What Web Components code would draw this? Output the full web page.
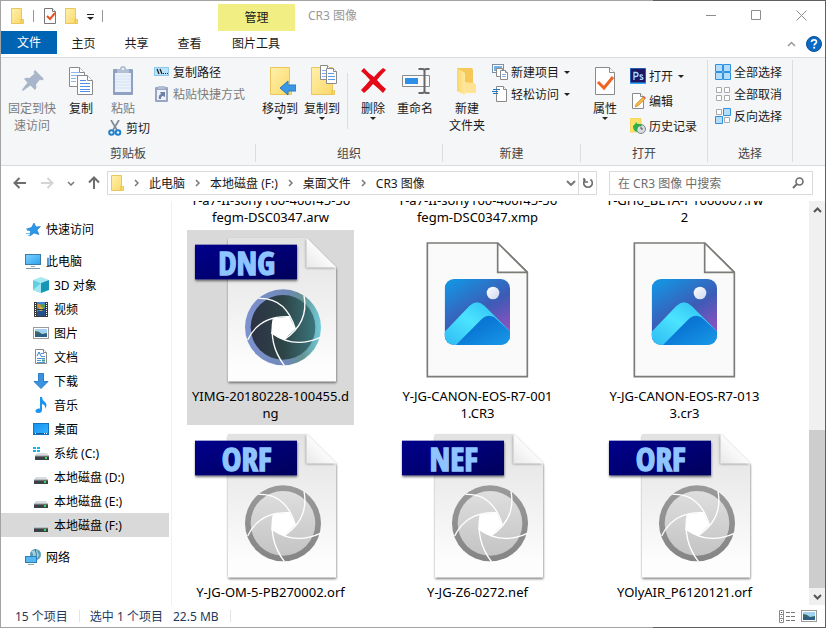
<!DOCTYPE html>
<html lang="zh-CN">
<head>
<meta charset="utf-8">
<title>CR3 图像</title>
<style>
body {
	margin: 0;
	font: 12px/17px "Noto Sans", "Noto Sans CJK SC", sans-serif;
	color: #1a1a1a;
}
</style>
</head>
<body>
<explorer-window>
	<title-bar slot="title" context="管理">CR3 图像</title-bar>
	<tab-strip slot="tabs"></tab-strip>
	<ribbon-bar slot="ribbon"></ribbon-bar>
	<address-bar slot="address"></address-bar>
	<nav-tree slot="nav">
		<nav-item icon="star">快速访问</nav-item>
		<nav-item icon="computer" spaced>此电脑</nav-item>
		<nav-item icon="cube" child>3D 对象</nav-item>
		<nav-item icon="video" child>视频</nav-item>
		<nav-item icon="picture" child>图片</nav-item>
		<nav-item icon="document" child>文档</nav-item>
		<nav-item icon="download" child>下载</nav-item>
		<nav-item icon="music" child>音乐</nav-item>
		<nav-item icon="desktop" child>桌面</nav-item>
		<nav-item icon="system" child>系统 (C:)</nav-item>
		<nav-item icon="drive" child>本地磁盘 (D:)</nav-item>
		<nav-item icon="drive" child>本地磁盘 (E:)</nav-item>
		<nav-item icon="drive" child selected>本地磁盘 (F:)</nav-item>
		<nav-item icon="network" spaced>网络</nav-item>
	</nav-tree>
	<file-grid slot="files">
		<file-tile kind="photo">Y-a7-II-sony100-400f45-56<br>fegm-DSC0347.arw</file-tile>
		<file-tile kind="photo">Y-a7-II-sony100-400f45-56<br>fegm-DSC0347.xmp</file-tile>
		<file-tile kind="photo">Y-GH6_BETA-P1000007.rw<br>2</file-tile>
		<file-tile kind="raw" tag="DNG" color selected>YIMG-20180228-100455.d<br>ng</file-tile>
		<file-tile kind="photo">Y-JG-CANON-EOS-R7-001<br>1.CR3</file-tile>
		<file-tile kind="photo">Y-JG-CANON-EOS-R7-013<br>3.cr3</file-tile>
		<file-tile kind="raw" tag="ORF">Y-JG-OM-5-PB270002.orf</file-tile>
		<file-tile kind="raw" tag="NEF">Y-JG-Z6-0272.nef</file-tile>
		<file-tile kind="raw" tag="ORF">YOlyAIR_P6120121.orf</file-tile>
	</file-grid>
	<status-bar slot="status"></status-bar>
</explorer-window>

<script>
const page = (x, y, w, h, c, fill = '#fff', stroke = '#8a8a8a') =>
	`<path d="M${x} ${y}h${w - c}l${c} ${c}v${h - c}h-${w}z" fill="${fill}" stroke="${stroke}"/>
	<path d="M${x + w - c} ${y}v${c}h${c}" fill="#fff" stroke="${stroke}"/>`;

const folder = (w, h) => `
	<defs><linearGradient id="f" x2="1" y2="1"><stop stop-color="#fff0ad"/><stop offset="1" stop-color="#fbd866"/></linearGradient></defs>
	<path d="M.5 .5h${w - 3}v${h - 5}h2v4h-${w - 1}z" fill="url(#f)" stroke="#eac65d"/>
	<path d="M${w - 3} ${h - 5}v4" stroke="#e8b93c"/>`;

const driveBody = `
	<path d="M3 8h10l2 3h-14z" fill="#d9dcdf"/>
	<path d="M1 11h14v4h-14z" fill="#3c4145"/>
	<path d="M1 11h14" stroke="#9a9ea2"/>
	<rect x="11" y="12" width="2" height="2" fill="#35e04a"/>`;

const landscape = `
	<rect x=".5" y="2.5" width="15" height="11" fill="#fff" stroke="#9b9b9b"/>
	<rect x="2" y="4" width="12" height="8" fill="#9fd2f3"/>
	<path d="M2 6q4 0 7 3l5-1v1h-12z" fill="#3b6b5a"/>
	<path d="M2 9h12v3h-12z" fill="#2d5f86"/>`;

// name: [width, height, markup]
const ICONS = {
	folder: [14, 16, folder(13, 16)],
	checkdoc: [13, 16, `${page(.5, .5, 11, 15, 3, '#fdfdfd', '#777')}<path d="M3 8l3 3 5-6" fill="none" stroke="#e4511c" stroke-width="2"/>`],
	caret: [7, 7, '<path d="M0 1.5h7" stroke="#222"/><path d="M0 4h7l-3.500 3z" fill="#222"/>'],
	down: [6, 3, '<path d="M0 0h6l-3 3z" fill="#222"/>'],
	min: [11, 11, '<path d="M0 5.500h10" stroke="#8d8d8d"/>'],
	max: [11, 11, '<path d="M.5 .5h9v9h-9z" fill="none" stroke="#8d8d8d"/>'],
	close: [11, 11, '<path d="M.5 .5l10 10m0-10l-10 10" stroke="#8d8d8d"/>'],
	up: [9, 6, '<path d="M1 5l3.500-3.500 3.500 3.500" fill="none" stroke="#999" stroke-width="1.500"/>'],
	help: [16, 16, `<circle cx="8" cy="8" r="7.500" fill="#0b6ac6" stroke="#0a4f94"/>
		<path d="M5.500 6q.2-2.200 2.600-2.200t2.400 2q0 1.200-1.300 1.900-1 .5-1 1.800" fill="none" stroke="#fff" stroke-width="1.700"/><rect x="7.300" y="10.800" width="1.800" height="1.800" fill="#fff"/>`],
	pin: [32, 32, '<path d="M19 5l9 9-2.500 1.500-1.500-1-4 5q1 4-1 5.500l-4.500-4.500-7 5-1.500.5.500-2 5-6.500-3.500-3.500q2-2 5.500-1l5-4.500-1-1.500z" fill="#a8b5ca"/>'],
	copy: [32, 32, `${page(4.5, 2.5, 15, 19, 5)}<path d="M6 7.500h8m-8 3h10m-10 3h5m-5 3h5" stroke="#8cb6ee"/>
		${page(12.5, 10.5, 15, 19, 5)}<path d="M15 15.500h6m-6 3h10m-10 3h10m-10 3h10m-10 2h10" stroke="#4f8fe6"/>`],
	paste: [32, 32, `<rect x="6" y="4" width="20" height="26" rx="1" fill="#8fa0c2"/><rect x="8" y="8" width="16" height="19" fill="#eaf1fb"/>
		<path d="M8 11h16m-16 3h16m-16 3h16m-16 3h16m-16 3h16" stroke="#d5e2f3"/>
		<path d="M10 4h3q0-3 3-3t3 3h3v4h-12z" fill="#b3bfd3"/><circle cx="16" cy="4" r="1" fill="#fff"/>`],
	cut: [16, 16, `<path d="M4 0l6 10M12 0l-6 10" stroke="#7d8a99" stroke-width="1.700"/>
		<circle cx="4.500" cy="12.500" r="2.300" fill="none" stroke="#1e80cc" stroke-width="2"/><circle cx="11" cy="12.500" r="2.300" fill="none" stroke="#1e80cc" stroke-width="2"/>`],
	path: [16, 16, '<rect x=".5" y="3.500" width="14" height="8" fill="#b9e2fb" stroke="#8cc8ee"/><path d="M3 5l2 5m1-5l2 5" stroke="#222" stroke-width="1.300"/><path d="M9 9.500h1m1 0h1m1 0h1" stroke="#222"/>'],
	shortcut: [16, 16, `<rect x="1" y="1" width="13" height="15" rx="1" fill="#96a6c4"/><rect x="3" y="4" width="9" height="10" fill="#eef3fb"/>
		<rect x="4" y="0" width="7" height="3" fill="#b3bfd3"/><path d="M5 13q-1-4 2-5l-1-2h5v5l-2-1q-2 0-2 3z" fill="#6e82a8"/>`],
	moveto: [32, 32, `<g transform="translate(6 2)">${folder(22, 28)}</g><path d="M16 23l8-7v4h8v6h-8v4z" fill="#3a98e4" stroke="#2a7cc4"/>`],
	copyto: [32, 32, `<g transform="translate(5 2)">${folder(24, 28)}</g>${page(14.5, .5, 10, 14, 3)}<path d="M16 5.500h5m-5 3h5m-5 3h5" stroke="#7fb0ee"/>
		${page(20.500, 3.500, 10, 15, 3)}<path d="M22 8.500h6m-6 3h7m-7 3h7" stroke="#5d97e8"/>`],
	delete: [32, 32, '<path d="M4 6l3-3q5 6 10 9 4-5 9-9l3 2q-5 5-9 10 4 5 9 9l-3 4q-5-5-10-9-4 5-9 9l-3-3q5-5 9-10-4-5-9-9z" fill="#e30b17"/>'],
	rename: [32, 32, `<path d="M3.500 10.500h27v11h-27z" fill="#fafafa" stroke="#8c8c8c"/><path d="M6 13h13v6h-13z" fill="#2d8fe6"/>
		<path d="M19.500 4h4q2 0 2 2v20q0 2 2 2h3m-11 0h4q2 0 2-2m0-20q0-2 2-2h3" fill="none" stroke="#686868" stroke-width="2"/>`],
	newfolder: [32, 32, `<defs><linearGradient id="n" x2="1"><stop stop-color="#fbd56a"/><stop offset="1" stop-color="#ffe9a0"/></linearGradient></defs>
		<path d="M6 3h14q2 0 2 2v13l3 2v8h-12l-7-2z" fill="#f4c95a"/><path d="M6 3l8 5v22l-8-4z" fill="url(#n)"/><path d="M22 18l3 2v8h-11v-11z" fill="#ffe392"/>`],
	newitem: [16, 16, `<rect x=".5" y=".5" width="11" height="8" fill="#fff" stroke="#7b8ea3"/><rect x="2" y="2" width="8" height="5" fill="#6fb2e8"/>
		<path d="M4.500 4.500h6v8h-6z" fill="#fff" stroke="#8a8a8a"/>${page(8.5, 6.5, 7, 9, 2)}<path d="M10 10.500h4m-4 2h4" stroke="#8ab4e8"/>`],
	easy: [16, 16, `${page(4.500, .500, 10, 15, 3)}<path d="M1 3.500h7m-8 2h6m-5 2h5" stroke="#1f78cc"/>`],
	props: [32, 32, `${page(6.5, 2.500, 19, 27, 5, '#fff', '#8a8a8a')}<path d="M9 17l6 6 9-11" fill="none" stroke="#ee6420" stroke-width="3"/>`],
	ps: [16, 16, `<rect width="16" height="16" fill="#31a8ff"/><rect width="15" height="14" x=".5" y=".5" fill="#1d1763"/>
		<path d="M4 12v-7.500h2q2 0 2 2t-2 2h-2M13 7.300q-3-1-3 .5 0 1 1.500 1.300t1.500 1.400q-.5 1.500-3.200.6" fill="none" stroke="#a9dcff" stroke-width="1.300"/>`],
	edit: [16, 16, `${page(2.5, .5, 11, 15, 3)}<path d="M5 14l1-3 7-7 2 2-7 7z" fill="#f5b53c" stroke="#b8792a" stroke-width=".500"/><path d="M13 4l1-1 2 2-1 1z" fill="#d45a5a"/>`],
	history: [16, 16, `<path d="M0 0h10l1 1v13h-11z" fill="#ffe06b" stroke="#e6c24a" stroke-width=".500"/><circle cx="11" cy="11" r="4.500" fill="#d9dde0" stroke="#7d858c"/>
		<path d="M11 8.500v2.500h2" fill="none" stroke="#555"/><path d="M3 8l4-4v2q4-1 5 2-5-1-5 6-4-1-4-6z" fill="#2fae4a"/>`],
	selall: [16, 16, '<path d="M.5 .5h7v7h-7zM8.500 .5h7v7h-7zM.5 8.500h7v7h-7zM8.500 8.500h7v7h-7z" fill="#b5ddfa" stroke="#2f92e0"/>'],
	selnone: [16, 16, '<path d="M1.500 1.500h5v5h-5zM9.500 1.500h5v5h-5zM1.500 9.500h5v5h-5zM9.500 9.500h5v5h-5z" fill="#fff" stroke="#aaa"/>'],
	selinv: [16, 16, '<path d="M1.500 1.500h5v5h-5zM9.500 9.500h5v5h-5z" fill="#fff" stroke="#aaa"/><path d="M8.500 .5h7v7h-7zM.5 8.500h7v7h-7z" fill="#b5ddfa" stroke="#2f92e0"/>'],
	back: [14, 12, '<path d="M6.500 1l-5 5 5 5M2 6h11" fill="none" stroke="#6d6d6d" stroke-width="2"/>'],
	forward: [14, 12, '<path d="M7.500 1l5 5-5 5M12 6h-11" fill="none" stroke="#d4d4d4" stroke-width="2"/>'],
	upward: [12, 14, '<path d="M1 6.500l5-5 5 5M6 2v11" fill="none" stroke="#6d6d6d" stroke-width="2"/>'],
	chevdown: [10, 6, '<path d="M1 1l4 4 4-4" fill="none" stroke="#777" stroke-width="2"/>'],
	chevsmall: [8, 5, '<path d="M1 1l3 3 3-3" fill="none" stroke="#777" stroke-width="1.500"/>'],
	chevright: [5, 8, '<path d="M1 1l3 3-3 3" fill="none" stroke="#777" stroke-width="1.500"/>'],
	refresh: [12, 12, '<path d="M3.500 2.500a4.300 4.300 0 1 0 5 0M2 1v4h4" fill="none" stroke="#6d6d6d" stroke-width="1.600"/>'],
	search: [12, 12, '<circle cx="7.500" cy="4.500" r="3.500" fill="none" stroke="#6d6d6d" stroke-width="1.600"/><path d="M5 7l-4 4" stroke="#6d6d6d" stroke-width="2"/>'],
	scrollup: [9, 6, '<path d="M1 5l3.500-3.500 3.500 3.500" fill="none" stroke="#555" stroke-width="2"/>'],
	scrolldown: [9, 6, '<path d="M1 1l3.500 3.500 3.500-3.500" fill="none" stroke="#555" stroke-width="2"/>'],
	star: [16, 16, '<path d="M9 2l2 4 4.500-.5-3.500 3.500 2 4.500-5-1.500-4 3 .5-5-4-2 5-1.500z" fill="#2a97e8" stroke="#1877c4" stroke-width=".600"/><path d="M1 12.500h4m-3-3h2m-1 5h2" stroke="#6cbcf0"/>'],
	computer: [16, 16, `<defs><linearGradient id="c" x2="1" y2="1"><stop stop-color="#7fd2fc"/><stop offset="1" stop-color="#2aa2f0"/></linearGradient></defs>
		<rect x=".5" y="1.500" width="15" height="10" fill="url(#c)" stroke="#3a7ba8"/><path d="M6 13.500h4" stroke="#9ab"/><path d="M1 15.500h14" stroke="#8396a6"/>`],
	cube: [16, 16, '<path d="M8 0l8 3-8 3-8-3z" fill="#a6e8f2"/><path d="M0 3l8 3v10l-8-3z" fill="#5fd0e4"/><path d="M16 3l-8 3v10l8-3z" fill="#1795b5"/><path d="M0 13l8-7v10z" fill="#9fe6f0"/>'],
	video: [16, 16, `<rect x="1" y="1" width="14" height="15" fill="#3a3a3a"/><rect x="4" y="1" width="8" height="14" fill="#3f86d8"/><path d="M4 11q4-4 8-1v5h-8z" fill="#24508f"/><circle cx="6" cy="5" r="2" fill="#d9922b"/><circle cx="10" cy="5" r="2" fill="#58a13c"/><circle cx="8" cy="8" r="2" fill="#e4c02d"/>
		<path d="M2.500 2v13m11-13v13" stroke="#fff" stroke-dasharray="1 1"/><path d="M4 8.500h8" stroke="#333"/>`],
	picture: [16, 16, landscape],
	document: [16, 16, `${page(2.500, .5, 11, 14, 3)}<path d="M8 4.500h3m-7 5h8m-8 2h4m-4 2h8m-4-6h4" stroke="#4d94d8"/><path d="M4 7l2-4 2 4" fill="none" stroke="#2c7ed0"/><path d="M9 11.500h3" stroke="#3a9a80" stroke-width="2"/>`],
	download: [16, 16, '<path d="M5.500 .5h5v8h4.500l-7 7-7-7h4.500z" fill="#3a93e0" stroke="#2d7cc4"/>'],
	music: [16, 16, '<path d="M7 0h2q0 3 3 5 3 3 0 7 1-4-3-5v6q0 3-3.500 3t-3-2.500q1-2.500 4.500-2z" fill="#1d94ee"/>'],
	desktop: [16, 16, `<defs><linearGradient id="d" x2="1" y2="1"><stop stop-color="#0f92f0"/><stop offset="1" stop-color="#3ab4ff"/></linearGradient></defs>
		<rect x=".5" y="2.500" width="15" height="11" fill="url(#d)" stroke="#1474bd"/><path d="M1 12.500h14" stroke="#0d5f9e"/><path d="M2 12.500h1m8 0h1m1 0h1" stroke="#fff"/>`],
	system: [16, 16, `<g transform="translate(1 0)">${driveBody}</g><path d="M0 2h3v2h-3zM4 2h3v2h-3zM0 5h3v2h-3zM4 5h3v2h-3z" fill="#12b5ea"/>`],
	drive: [16, 16, driveBody],
	network: [16, 16, `<circle cx="10.500" cy="5.500" r="5.500" fill="#5a9cb8"/><path d="M6 2q3 3 2 5l4 2q3-2 1-5t1-3" fill="#a7d5de"/><path d="M10 0q2 4 1 10" stroke="#2e6f94" fill="none"/>
		<rect x=".5" y="7.500" width="11" height="6" fill="#55b8f5" stroke="#2d7eb5"/><path d="M3 15.500h6" stroke="#8aa"/>`],
	details: [16, 13, `<path d="M.5 .5h4v12h-4z" fill="#fff" stroke="#8a8a8a"/><path d="M0 4.500h5m-5 4h5" stroke="#8a8a8a"/><path d="M2 2.500h1" stroke="#444"/><path d="M2 6.500h1" stroke="#2a80d8"/><path d="M2 10.500h1" stroke="#d33"/>
		<path d="M7 2.500h4m1 0h4m-9 4h4m1 0h4m-9 4h4m1 0h4" stroke="#777"/>`],
	thumbs: [16, 16, landscape]
};

const mount = (el, html) => {
	const root = el.attachShadow({mode: 'open'});
	root.innerHTML = html;
	return root;
};

class UiIcon extends HTMLElement {
	connectedCallback() {
		if (this.shadowRoot) {
			return;
		}
		const [w, h, body] = ICONS[this.getAttribute('name')];
		mount(this, `
			<style>:host { display: inline-flex; flex: none; } svg { display: block; }</style>
			<svg width="${w}" height="${h}" viewBox="0 0 ${w} ${h}" aria-hidden="true">${body}</svg>`);
	}
}
customElements.define('ui-icon', UiIcon);

class ExplorerWindow extends HTMLElement {
	constructor() {
		super();
		mount(this, `
			<style>
			:host {
				display: flex;
				flex-direction: column;
				box-sizing: border-box;
				height: 100vh;
				padding: 1px;
				background: linear-gradient(to right, #a3a3a3 79%, #5f5f63 79%);
			}
			.top { background: #fff; }
			main {
				flex: 1;
				display: flex;
				min-height: 0;
				background: #fff;
			}
			</style>
			<header class="top">
				<slot name="title"></slot>
				<slot name="tabs"></slot>
				<slot name="ribbon"></slot>
				<slot name="address"></slot>
			</header>
			<main><slot name="nav"></slot><slot name="files"></slot></main>
			<slot name="status"></slot>`);
	}
}
customElements.define('explorer-window', ExplorerWindow);

class TitleBar extends HTMLElement {
	constructor() {
		super();
		mount(this, `
			<style>
			:host { display: flex; height: 30px; }
			button { border: 0; padding: 0; background: none; font: inherit; display: flex; align-items: center; justify-content: center; }
			.quick { display: flex; align-items: center; gap: 8px; box-sizing: border-box; width: 217px; padding-left: 10px; }
			.quick i { width: 1px; height: 12px; background: #999; }
			.quick i:first-of-type { margin-right: 2px; }
			.context { width: 77px; margin-top: 3px; line-height: 27px; text-align: center; background: #f1ef83; }
			.name { flex: 1; padding-left: 13px; line-height: 29px; color: #999; }
			.controls { display: flex; padding-right: 1px; }
			.controls button { width: 45px; height: 28px; }
			</style>
			<div class="quick">
				<button aria-label="文件夹"><ui-icon name="folder"></ui-icon></button><i></i>
				<button aria-label="属性"><ui-icon name="checkdoc"></ui-icon></button>
				<button aria-label="新建文件夹"><ui-icon name="folder"></ui-icon></button>
				<button aria-label="自定义"><ui-icon name="caret"></ui-icon></button><i></i>
			</div>
			<div class="context">${this.getAttribute('context')}</div>
			<div class="name"><slot></slot></div>
			<div class="controls">
				<button aria-label="最小化"><ui-icon name="min"></ui-icon></button>
				<button aria-label="最大化"><ui-icon name="max"></ui-icon></button>
				<button aria-label="关闭"><ui-icon name="close"></ui-icon></button>
			</div>`);
	}
}
customElements.define('title-bar', TitleBar);

class TabStrip extends HTMLElement {
	constructor() {
		super();
		mount(this, `
			<style>
			:host { display: flex; height: 26px; }
			button { width: 53px; height: 24px; border: 0; padding: 0; background: none; color: inherit; font: inherit; }
			.file { width: 56px; height: 23px; background: #0064b5; color: #fff; }
			.wide { width: 80px; }
			.right { flex: 1; display: flex; justify-content: flex-end; align-items: center; gap: 10px; padding-right: 3px; }
			.right button { display: flex; align-items: center; width: auto; }
			</style>
			<button class="file">文件</button>
			<button>主页</button>
			<button>共享</button>
			<button>查看</button>
			<button class="wide">图片工具</button>
			<div class="right">
				<button aria-label="折叠功能区"><ui-icon name="up"></ui-icon></button>
				<button aria-label="帮助"><ui-icon name="help"></ui-icon></button>
			</div>`);
	}
}
customElements.define('tab-strip', TabStrip);

// Big button (icon over label) by default, "small" puts them in a row
class RibbonButton extends HTMLElement {
	constructor() {
		super();
		const drop = this.hasAttribute('drop') ? '<ui-icon name="down"></ui-icon>' : '';
		const off = this.hasAttribute('off') ? 'disabled' : '';
		mount(this, `
			<style>
			:host { display: block; }
			button {
				display: flex;
				flex-direction: column;
				align-items: center;
				width: 100%;
				min-width: 42px;
				border: 0;
				padding: 0;
				background: none;
				color: #1a1a1a;
				font: inherit;
			}
			button:disabled { color: #7b7b7b; }
			.label { padding-top: 3px; white-space: nowrap; }
			:host([small]) button { flex-direction: row; height: 22px; gap: 3px; }
			:host([small]) .label { padding: 0; }
			:host([small]) ui-icon + .label + ui-icon { padding-left: 2px; }
			</style>
			<button ${off}><ui-icon name="${this.getAttribute('icon')}"></ui-icon><span class="label"><slot></slot></span>${drop}</button>`);
	}
}
customElements.define('ribbon-button', RibbonButton);

class RibbonGroup extends HTMLElement {
	constructor() {
		super();
		mount(this, `
			<style>
			:host { display: flex; }
			section { display: flex; flex-direction: column; justify-content: space-between; }
			.items { display: flex; padding: 7px 10px 0 3px; }
			:host([tight]) .items { padding-right: 6px; }
			.label { text-align: center; color: #444; padding-bottom: 3px; }
			.rule { align-self: flex-end; width: 1px; height: 18px; margin-bottom: 3px; background: #dcdddf; }
			:host([tall]) .rule { height: 102px; }
			</style>
			<section aria-label="${this.getAttribute('label')}">
				<div class="items"><slot></slot></div>
				<div class="label">${this.getAttribute('label')}</div>
			</section>
			<div class="rule"></div>`);
	}
}
customElements.define('ribbon-group', RibbonGroup);

class RibbonBar extends HTMLElement {
	constructor() {
		super();
		mount(this, `
			<style>
			:host { display: flex; height: 107px; border: solid #dadbdc; border-width: 1px 0; background: #f5f6f7; }
			.col { display: flex; flex-direction: column; align-items: flex-start; padding-left: 4px; }
			.up { margin-top: -4px; }
			.spread { gap: 3px; }
			.stack { display: flex; flex-direction: column; align-items: flex-start; }
			.cut { padding-left: 5px; }
			.rule { width: 1px; height: 56px; margin: 8px 4px 0; background: #dcdddf; }
			.pin { width: 56px; }
			</style>
			<ribbon-group label="剪贴板">
				<ribbon-button class="pin" icon="pin" off>固定到快<br>速访问</ribbon-button>
				<ribbon-button icon="copy">复制</ribbon-button>
				<div class="stack">
					<ribbon-button icon="paste" off>粘贴</ribbon-button>
					<ribbon-button class="cut" small icon="cut">剪切</ribbon-button>
				</div>
				<div class="col up">
					<ribbon-button small icon="path">复制路径</ribbon-button>
					<ribbon-button small icon="shortcut" off>粘贴快捷方式</ribbon-button>
				</div>
			</ribbon-group>
			<ribbon-group label="组织" tight>
				<ribbon-button icon="moveto" drop>移动到</ribbon-button>
				<ribbon-button icon="copyto" drop>复制到</ribbon-button>
				<div class="rule"></div>
				<ribbon-button icon="delete" drop>删除</ribbon-button>
				<ribbon-button icon="rename">重命名</ribbon-button>
			</ribbon-group>
			<ribbon-group label="新建">
				<ribbon-button icon="newfolder">新建<br>文件夹</ribbon-button>
				<div class="col up">
					<ribbon-button small icon="newitem" drop>新建项目</ribbon-button>
					<ribbon-button small icon="easy" drop>轻松访问</ribbon-button>
				</div>
			</ribbon-group>
			<ribbon-group label="打开" tall>
				<ribbon-button icon="props" drop>属性</ribbon-button>
				<div class="col spread">
					<ribbon-button small icon="ps" drop>打开</ribbon-button>
					<ribbon-button small icon="edit">编辑</ribbon-button>
					<ribbon-button small icon="history">历史记录</ribbon-button>
				</div>
			</ribbon-group>
			<ribbon-group label="选择" tall>
				<div class="col up">
					<ribbon-button small icon="selall">全部选择</ribbon-button>
					<ribbon-button small icon="selnone">全部取消</ribbon-button>
					<ribbon-button small icon="selinv">反向选择</ribbon-button>
				</div>
			</ribbon-group>`);
	}
}
customElements.define('ribbon-bar', RibbonBar);

class AddressBar extends HTMLElement {
	constructor() {
		super();
		const crumbs = ['此电脑', '本地磁盘 (F:)', '桌面文件', 'CR3 图像'];
		mount(this, `
			<style>
			:host { display: flex; align-items: center; padding: 5px 12px 6px; }
			button { display: flex; align-items: center; border: 0; padding: 0; background: none; font: inherit; color: #1a1a1a; }
			.arrows { display: flex; align-items: center; justify-content: space-between; width: 87px; margin-right: 7px; }
			.box { display: flex; align-items: center; box-sizing: border-box; height: 24px; border: 1px solid #d9d9d9; background: #fff; }
			.path { flex: 8; padding-left: 3px; }
			.path nav { flex: 1; display: flex; align-items: center; }
			.path nav ui-icon { padding: 0 10px 0 9px; }
			.path nav button { padding-right: 1px; white-space: nowrap; }
			.refresh { width: 18px; height: 22px; justify-content: center; margin-left: 2px; border-left: 1px solid #d9d9d9; }
			.search { flex: 3; margin-left: 12px; padding: 0 8px; }
			input { flex: 1; min-width: 0; border: 0; padding: 0; background: none; font: inherit; outline: 0; }
			input::placeholder { color: #6d6d6d; opacity: 1; }
			</style>
			<div class="arrows">
				<button aria-label="后退"><ui-icon name="back"></ui-icon></button>
				<button aria-label="前进"><ui-icon name="forward"></ui-icon></button>
				<button aria-label="最近位置"><ui-icon name="chevsmall"></ui-icon></button>
				<button aria-label="上移"><ui-icon name="upward"></ui-icon></button>
			</div>
			<div class="box path">
				<ui-icon name="folder"></ui-icon>
				<nav>${crumbs.map(c => `<ui-icon name="chevright"></ui-icon><button>${c}</button>`).join('')}</nav>
				<button aria-label="以前的位置"><ui-icon name="chevdown"></ui-icon></button>
				<button class="refresh" aria-label="刷新"><ui-icon name="refresh"></ui-icon></button>
			</div>
			<div class="box search">
				<input type="text" aria-label="搜索" placeholder="在 CR3 图像 中搜索">
				<ui-icon name="search"></ui-icon>
			</div>`);
	}
}
customElements.define('address-bar', AddressBar);

class NavTree extends HTMLElement {
	constructor() {
		super();
		mount(this, `
			<style>
			:host { display: block; flex: none; box-sizing: border-box; width: 171px; padding: 16px 2px 0 0; border-right: 1px solid #f0f0f0; }
			</style>
			<nav><slot></slot></nav>`);
	}
}
customElements.define('nav-tree', NavTree);

class NavItem extends HTMLElement {
	constructor() {
		super();
		mount(this, `
			<style>
			:host { display: block; }
			:host([spaced]) { margin-top: 8px; }
			a { display: flex; align-items: center; gap: 5px; height: 24px; padding-left: 24px; color: #000; text-decoration: none; }
			:host([child]) a { padding-left: 32px; }
			:host([selected]) a { background: #d9d9d9; }
			</style>
			<a href="#"><ui-icon name="${this.getAttribute('icon')}"></ui-icon><span><slot></slot></span></a>`);
	}
}
customElements.define('nav-item', NavItem);

class FileGrid extends HTMLElement {
	constructor() {
		super();
		// Scrolled to the end: the last row sits on the bottom edge
		mount(this, `
			<style>
			:host { flex: 1; display: flex; min-width: 0; }
			.view { flex: 1; display: flex; flex-direction: column; justify-content: flex-end; overflow: hidden; padding: 0 0 1px 15px; }
			.grid { display: grid; grid-template-columns: repeat(auto-fill, 167px); gap: 1px 40px; align-items: start; }
			.scroll { display: flex; flex-direction: column; width: 16px; background: #f0f0f0; }
			.scroll button { display: flex; align-items: center; justify-content: center; height: 17px; border: 0; padding: 0; background: none; }
			.before { flex: 211; }
			.thumb { flex: 158; background: #cdcdcd; }
			</style>
			<div class="view"><div class="grid"><slot></slot></div></div>
			<div class="scroll">
				<button aria-label="向上"><ui-icon name="scrollup"></ui-icon></button>
				<div class="before"></div>
				<div class="thumb"></div>
				<button aria-label="向下"><ui-icon name="scrolldown"></ui-icon></button>
			</div>`);
	}
}
customElements.define('file-grid', FileGrid);

const photoArt = `
<svg viewBox="624 6 501 474">
	<defs>
		<linearGradient id="sky" x1=".2" y1="0" x2=".8" y2="1"><stop stop-color="#1691e0"/><stop offset=".5" stop-color="#3d5bb5"/><stop offset="1" stop-color="#a14fc4"/></linearGradient>
		<linearGradient id="near" x1="1" y1="0" x2="0" y2="1"><stop stop-color="#26b4ee"/><stop offset=".5" stop-color="#4be4ff"/><stop offset="1" stop-color="#2cb6f0"/></linearGradient>
		<linearGradient id="far" x2="1" y2="1"><stop stop-color="#0a6fd0"/><stop offset=".4" stop-color="#0a78d6"/><stop offset="1" stop-color="#1c9ee8"/></linearGradient>
		<linearGradient id="moon" x2="1" y2="1"><stop stop-color="#fff"/><stop offset="1" stop-color="#cdd6ee"/></linearGradient>
		<clipPath id="card"><rect x="776" y="153" width="196" height="198" rx="28"/></clipPath>
	</defs>
	<path d="M724 45H935L1024 133V446H724Z" fill="#fafafa" stroke="#7b7b77" stroke-width="5"/>
	<path d="M935 45V133H1024" fill="#fff" stroke="#7b7b77" stroke-width="5"/>
	<path d="M935 45L1024 133" stroke="#7b7b77" stroke-width="5"/>
	<g clip-path="url(#card)">
		<rect x="776" y="153" width="196" height="198" fill="url(#sky)"/>
		<path d="M770 318L850 234Q873 212 896 234L972 310V360H770Z" fill="url(#near)"/>
		<path d="M810 351L885 275Q905 255 925 268L980 318V360H800Z" fill="url(#far)"/>
		<circle cx="921" cy="195" r="19" fill="url(#moon)"/>
	</g>
</svg>`;

const rawArt = (tag, color) => {
	const ring = color
		? '<stop stop-color="#7d92d0"/><stop offset=".55" stop-color="#7088b8"/><stop offset=".75" stop-color="#639391"/><stop offset="1" stop-color="#73cbdc"/>'
		: '<stop stop-color="#9a9a9a"/><stop offset="1" stop-color="#858585"/>';
	const lens = color
		? '<stop stop-color="#3b757d"/><stop offset=".5" stop-color="#2d4446"/><stop offset="1" stop-color="#2c3245"/>'
		: '<stop stop-color="#dedede"/><stop offset="1" stop-color="#c4c4c4"/>';
	return `
<svg viewBox="3 6 501 474">
	<defs>
		<linearGradient id="sheet" x2="0" y2="1"><stop stop-color="#e2e2e2"/><stop offset=".9" stop-color="#fdfdfd"/></linearGradient>
		<linearGradient id="fold" x1="0" y1="1" x2=".6" y2=".4"><stop stop-color="#e8e8e8"/><stop offset="1" stop-color="#fff"/></linearGradient>
		<linearGradient id="banner" x2="1" y2="1"><stop stop-color="#00008c"/><stop offset="1" stop-color="#00005c"/></linearGradient>
		<linearGradient id="ring" ${color ? '' : 'x2="0" y2="1"'}>${ring}</linearGradient>
		<linearGradient id="lens" ${color ? 'x1="1" x2="0"' : 'x2="0" y2="1"'}>${lens}</linearGradient>
		<filter id="shade" x="-10%" y="-10%" width="120%" height="125%"><feDropShadow dx="1" dy="5" stdDeviation="3" flood-opacity=".55"/></filter>
		<filter id="soft" x="-20%" y="-10%" width="130%" height="125%"><feDropShadow dx="-2" dy="3" stdDeviation="3" flood-opacity=".35"/></filter>
	</defs>
	<path d="M126 30H362L450 118V460H126Z" fill="url(#sheet)" filter="url(#shade)"/>
	<path d="M362 30V118H450Z" fill="url(#fold)" filter="url(#soft)"/>
	<circle cx="291" cy="298" r="114" fill="url(#ring)"/>
	<circle cx="291" cy="298" r="97" fill="url(#lens)"/>
	<path d="M262 270L311 266L328 303L293 336L256 315Z" fill="#fff"/>
	<g fill="none" stroke="#fff" stroke-width="4">
		<path d="M218 211Q300 208 328 303"/>
		<path d="M354 202Q370 285 293 336"/>
		<path d="M403 328Q325 364 256 315"/>
		<path d="M295 412Q247 350 262 270"/>
		<path d="M185 336Q220 262 311 266"/>
	</g>
	<rect x="27" y="50" width="306" height="104" fill="url(#banner)" filter="url(#shade)"/>
	<text x="182" y="140" text-anchor="middle" font-family="'Liberation Sans Narrow', 'Open Sans Condensed', 'DejaVu Sans Condensed', sans-serif" font-weight="700" font-size="99" fill="#8ec4ff" stroke="#8ec4ff" stroke-width="4">${tag}</text>
</svg>`;
};

class FileTile extends HTMLElement {
	constructor() {
		super();
		const art = this.getAttribute('kind') == 'raw'
			? rawArt(this.getAttribute('tag'), this.hasAttribute('color'))
			: photoArt;
		mount(this, `
			<style>
			:host { display: block; padding-bottom: 3px; text-align: center; color: #000; }
			:host([selected]) { background: #d9d9d9; }
			svg { display: block; width: 100%; }
			.name { font-size: 13px; white-space: nowrap; }
			</style>
			${art}
			<div class="name"><slot></slot></div>`);
	}
}
customElements.define('file-tile', FileTile);

class StatusBar extends HTMLElement {
	constructor() {
		super();
		mount(this, `
			<style>
			:host { display: flex; align-items: center; height: 22px; padding: 0 8px 0 14px; background: #fff; color: #1e395b; }
			i { width: 1px; height: 12px; margin: 0 10px 0 11px; background: #e3e3e3; }
			.size { padding-left: 10px; }
			.views { flex: 1; display: flex; justify-content: flex-end; align-items: center; gap: 6px; }
			button { display: flex; border: 0; padding: 0; background: none; }
			</style>
			<span>15 个项目</span><i></i>
			<span>选中 1 个项目</span><span class="size">22.5 MB</span><i></i>
			<div class="views">
				<button aria-label="详细信息"><ui-icon name="details"></ui-icon></button>
				<button aria-label="大图标"><ui-icon name="thumbs"></ui-icon></button>
			</div>`);
	}
}
customElements.define('status-bar', StatusBar);
</script>
</body>
</html>
